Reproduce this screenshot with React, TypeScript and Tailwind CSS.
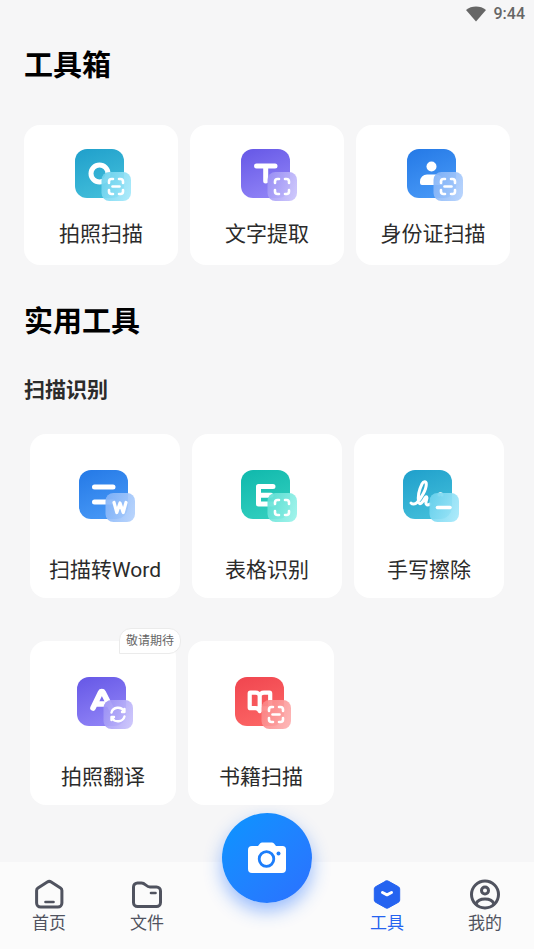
import type { ReactNode } from "react";

type Tone = {
  from: string;
  to: string;
  badgeFrom: string;
  badgeTo: string;
};

const tones: Record<string, Tone> = {
  cyan: { from: "#1f9fcb", to: "#40bcd9", badgeFrom: "#6fd3ee", badgeTo: "#a4e8fa" },
  violet: { from: "#6557e6", to: "#8d80f5", badgeFrom: "#9e94f5", badgeTo: "#c9c2fb" },
  blue: { from: "#2479e6", to: "#4596f5", badgeFrom: "#84b4f8", badgeTo: "#b2d0fc" },
  teal: { from: "#0fb8ac", to: "#30cdbd", badgeFrom: "#62e0d5", badgeTo: "#98f2e9" },
  red: { from: "#f0454f", to: "#fb6363", badgeFrom: "#fb8585", badgeTo: "#fdb0b0" },
};

type Tool = {
  id: string;
  label: string;
  tone: keyof typeof tones;
  glyph: ReactNode;
  badge: ReactNode;
  note?: string;
};

// Four rounded corners of the viewfinder badge
const frame = (
  <path d="M34 34v-1.5a2.5 2.5 0 0 1 2.5-2.5H38M44 30h1.5a2.5 2.5 0 0 1 2.5 2.5V34M48 41v1.5a2.5 2.5 0 0 1-2.5 2.5H44M38 45h-1.5a2.5 2.5 0 0 1-2.5-2.5V41" />
);

const scanFrame = (
  <>
    {frame}
    <path d="M37.5 37.5h7" />
  </>
);

const basicTools: Tool[] = [
  {
    id: "photo",
    label: "拍照扫描",
    tone: "cyan",
    glyph: <circle cx="24.5" cy="24.5" r="8.5" />,
    badge: scanFrame,
  },
  {
    id: "text",
    label: "文字提取",
    tone: "violet",
    glyph: <path d="M15.5 17h18.5M24.7 17V32" />,
    badge: frame,
  },
  {
    id: "idcard",
    label: "身份证扫描",
    tone: "blue",
    glyph: (
      <g fill="#fff" stroke="none">
        <circle cx="24.5" cy="17.5" r="5" />
        <path d="M13 34v-1.500a7 7 0 0 1 7-7h9a7 7 0 0 1 7 7V36H15a2 2 0 0 1-2-2Z" />
      </g>
    ),
    badge: scanFrame,
  },
];

const scanTools: Tool[] = [
  {
    id: "word",
    label: "扫描转Word",
    tone: "blue",
    glyph: <path d="M15.5 17h18.5M15.5 32h18.5" />,
    badge: <path strokeWidth="3.2" d="m35 32.5 2.8 10 3.200-9.500 3.200 9.500 2.800-10" />,
  },
  {
    id: "table",
    label: "表格识别",
    tone: "teal",
    glyph: <path d="M32 16.5H17.5v17.500H32M17.500 25.200H30" />,
    badge: frame,
  },
  {
    id: "erase",
    label: "手写擦除",
    tone: "cyan",
    glyph: (
      <>
        <path
          strokeWidth="3"
          d="M8 33c1.5 1.5 4 1.5 6-.5 4-4 9.5-13 9.300-18.500-.1-3-2.800-3-4.300 0-2.500 5-4.200 13-3.400 18 .8 4 4.400 0 6.400-4 1.400-2.500 2.700-1 1.500 2-1.500 4 .2 6.500 3.500 4"
        />
        <path strokeWidth="3" d="M36 25c0-1.500 3-2 3 0" />
      </>
    ),
    badge: <path strokeWidth="3.6" d="M34.5 37.5h12.5" />,
  },
];

const moreTools: Tool[] = [
  {
    id: "translate",
    label: "拍照翻译",
    tone: "violet",
    glyph: <path strokeWidth="5.6" d="m16 31 7.5-15.500a1.500 1.500 0 0 1 2.700 0L34 31M20 27h11" />,
    badge: (
      <path
        strokeWidth="2.4"
        d="M34.5 35.5c1.500-5.500 9.500-6.500 12.500-1.500M47.500 39.500c-1.500 5.500-9.500 6.500-12.500 1.500M47.500 32V35H45M34.500 43V40H37"
      />
    ),
    note: "敬请期待",
  },
  {
    id: "book",
    label: "书籍扫描",
    tone: "red",
    glyph: (
      <path
        strokeWidth="4.2"
        d="M24.7 34c-.8-1.800-2.200-2.800-4.200-2.800h-5a.8.8 0 0 1-.8-.8V16.500a.8.8 0 0 1 .8-.8h5c2.400 0 4.200 1.200 4.200 3.300 0-2.100 1.800-3.300 4.200-3.300h5.500a.8.8 0 0 1 .8.8v14a.8.8 0 0 1-.8.8h-5.500c-2 0-3.400 1-4.200 2.800ZM24.700 19v14"
      />
    ),
    badge: scanFrame,
  },
];

function ToolIcon({ tool }: { tool: Tool }) {
  const tone = tones[tool.tone];
  return (
    <svg viewBox="-3 0 59 52" className="h-[52px] w-[59px]" fill="none" aria-hidden="true">
      <defs>
        <linearGradient id={`${tool.id}-tile`} x1="0" y1="0" x2="0.4" y2="1">
          <stop stopColor={tone.from} />
          <stop offset="1" stopColor={tone.to} />
        </linearGradient>
        <linearGradient id={`${tool.id}-badge`} x1="0" y1="0.3" x2="1" y2="0.7">
          <stop stopColor={tone.badgeFrom} />
          <stop offset="1" stopColor={tone.badgeTo} />
        </linearGradient>
      </defs>
      <rect width="49" height="49" rx="12" fill={`url(#${tool.id}-tile)`} />
      <g stroke="#fff" strokeWidth="5" strokeLinecap="round" strokeLinejoin="round">
        {tool.glyph}
      </g>
      <rect x="26.5" y="23" width="29.5" height="29" rx="8" fill={`url(#${tool.id}-badge)`} fillOpacity="0.93" />
      <g stroke="#fff" strokeWidth="2.6" strokeLinecap="round" strokeLinejoin="round">
        {tool.badge}
      </g>
    </svg>
  );
}

function ToolCard({ tool, tall = false }: { tool: Tool; tall?: boolean }) {
  return (
    <button
      type="button"
      className={`relative flex flex-col items-center rounded-2xl bg-white text-[21px] leading-8 text-[#2b2b2b] ${
        tall ? "gap-8 pt-9 pb-3" : "gap-[17px] pt-6 pb-[15px]"
      }`}
    >
      <ToolIcon tool={tool} />
      <span className="whitespace-nowrap">{tool.label}</span>
      {tool.note && (
        <span className="absolute -top-[13px] -right-[5px] rounded-t-xl rounded-br-xl border border-[#ebebeb] bg-white px-1.5 text-xs leading-6 text-[#666]">
          {tool.note}
        </span>
      )}
    </button>
  );
}

function NavItem({ label, active = false, children }: { label: string; active?: boolean; children: ReactNode }) {
  return (
    <a
      href="#"
      aria-current={active ? "page" : undefined}
      className={`flex flex-col items-center gap-px pt-4 text-[17px] leading-6 ${active ? "text-[#2563f0]" : "text-[#50535f]"}`}
    >
      <svg
        viewBox="0 0 32 32"
        className="size-8"
        fill="none"
        stroke="currentColor"
        strokeWidth="3"
        strokeLinecap="round"
        strokeLinejoin="round"
        aria-hidden="true"
      >
        {children}
      </svg>
      {label}
    </a>
  );
}

export default function App() {
  return (
    <div className="flex min-h-screen flex-col bg-[#f6f6f7] font-[Roboto,'Noto_Sans_CJK_SC',sans-serif]">
      <header className="flex h-7 items-center justify-end gap-2 px-[9px] text-base font-medium text-[#666]">
        <svg viewBox="0 0 20 16" className="h-4 w-5" fill="currentColor" aria-hidden="true">
          <path d="M0 4C5.5-.6 14.500-.6 20 4L10 15.500Z" />
        </svg>
        <span>9:44</span>
      </header>

      <main className="flex-1 px-6 pt-[18px]">
        <h1 className="text-[29px] leading-10 font-bold text-black">工具箱</h1>
        <div className="mt-[39px] grid grid-cols-3 gap-3">
          {basicTools.map((tool) => (
            <ToolCard key={tool.id} tool={tool} />
          ))}
        </div>

        <h2 className="mt-[37px] text-[29px] leading-10 font-bold text-black">实用工具</h2>
        <h3 className="mt-8 text-[21px] leading-8 font-bold text-[#2b2b2b]">扫描识别</h3>
        <div className="mt-7 grid grid-cols-3 gap-3 px-1.5">
          {scanTools.map((tool) => (
            <ToolCard key={tool.id} tool={tool} tall />
          ))}
        </div>
        <div className="mt-[43px] grid grid-cols-3 gap-3 pr-[18px] pl-1.5">
          {moreTools.map((tool) => (
            <ToolCard key={tool.id} tool={tool} tall />
          ))}
        </div>
      </main>

      <nav className="mt-14 grid grid-cols-[1fr_1fr_142px_1fr_1fr] bg-[#fbfbfb] pb-3.5">
        <NavItem label="首页">
          <path d="M14.3 4 5 10a3 3 0 0 0-1.400 2.500V25a4 4 0 0 0 4 4h17.300a4 4 0 0 0 4-4V12.500a3 3 0 0 0-1.400-2.500l-9.300-6a3.500 3.500 0 0 0-3.900 0Z" />
          <path strokeWidth="2.6" d="M12.5 24h8" />
        </NavItem>
        <NavItem label="文件">
          <path d="M2.5 9v15.500a4 4 0 0 0 4 4h19a4 4 0 0 0 4-4V13a4 4 0 0 0-4-4H19c-4 0-4.500-4-8.500-4h-4a4 4 0 0 0-4 4Z" />
          <path strokeWidth="2.6" d="M20 15h4.500" />
        </NavItem>
        <div className="-mt-[49px] flex h-[90px] justify-center">
          <button
            type="button"
            aria-label="拍照"
            className="flex size-[90px] items-center justify-center rounded-full bg-linear-to-br from-[#0795ff] to-[#2b70ff] text-white shadow-[0_8px_18px_rgba(30,110,255,0.45)]"
          >
            <svg viewBox="0 0 38 32" className="h-8 w-[38px]" aria-hidden="true">
              <path
                fill="currentColor"
                d="M4 4h6l2-2.500A3 3 0 0 1 14.500.5h9A3 3 0 0 1 26 1.500L28 4h6.500A3.500 3.500 0 0 1 38 7.500V27a4 4 0 0 1-4 4H4a4 4 0 0 1-4-4V8a4 4 0 0 1 4-4Z"
              />
              <circle cx="18.5" cy="17" r="7.3" fill="none" stroke="#1d7efa" strokeWidth="2.8" />
              <circle cx="30.5" cy="11.5" r="2" fill="#1d7efa" />
            </svg>
          </button>
        </div>
        <NavItem label="工具" active>
          <path
            fill="currentColor"
            d="M14.8 3.100 4.500 8.800A2.400 2.400 0 0 0 3.300 10.900v11.200c0 .9.500 1.700 1.200 2.100l10.300 5.700c.8.400 1.700.4 2.400 0l10.300-5.700c.8-.4 1.200-1.200 1.200-2.100V10.900c0-.8-.5-1.700-1.200-2.100L17.200 3.100a2.400 2.400 0 0 0-2.400 0Z"
            strokeWidth="1"
          />
          <path stroke="#fff" d="m11.500 14.500 4.500 2.300 4.500-2.300" />
        </NavItem>
        <NavItem label="我的">
          <circle cx="16" cy="16.5" r="13.5" />
          <circle cx="16" cy="12.5" r="3.5" />
          <path d="M7 26c1.500-4 5-5 9-5s7.500 1 9 5" />
        </NavItem>
      </nav>
    </div>
  );
}
